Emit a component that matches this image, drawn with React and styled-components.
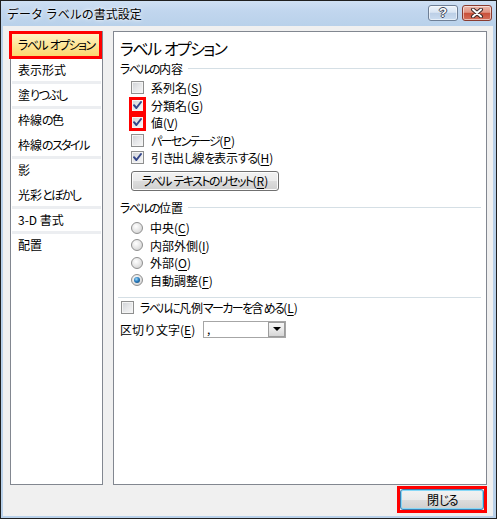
import React from 'react';
import styled, { createGlobalStyle } from 'styled-components';

const GlobalStyle = createGlobalStyle`
  html, body {
    margin: 0;
    padding: 0;
    background: #ffffff;
  }
  body {
    font-family: "Noto Sans CJK JP", "Liberation Sans", sans-serif;
    font-size: 12px;
    color: #000000;
  }
  * {
    box-sizing: border-box;
  }
`

const Window = styled.div`
  width: 497px;
  height: 519px;
  border: 1px solid #1f1f1f;
  background: #b9d1ea;
  display: flex;
  flex-direction: column;
`

const TitleBar = styled.div`
  height: 25px;
  display: flex;
  align-items: flex-start;
  padding: 0 4px 0 6px;
  background: linear-gradient(#cfe0f3 0%, #c1d6ee 40%, #b9d1ea 100%);
  .title {
    flex: 1;
    line-height: 25px;
    font-size: 12px;
    color: #000;
    text-shadow: 0 0 5px rgba(255, 255, 255, 0.95), 0 0 2px rgba(255, 255, 255, 0.9);
  }
  .buttons {
    display: flex;
    gap: 4px;
    margin-top: 4px;
  }
`

const CaptionButton = styled.div`
  width: 30px;
  height: 16px;
  border-radius: 3px;
  border: 1px solid ${p => (p.$close ? '#8a3b2f' : '#6e7f96')};
  background: ${p =>
    p.$close
      ? 'linear-gradient(#ecb8ac 0%, #e09483 45%, #c9503a 52%, #d56f5a 100%)'
      : 'linear-gradient(#eef4fb 0%, #d9e5f3 45%, #bccfe6 52%, #cadcf0 100%)'};
  box-shadow: inset 0 0 0 1px rgba(255, 255, 255, 0.55);
  display: flex;
  align-items: center;
  justify-content: center;
  font-family: "Liberation Sans", sans-serif;
  font-weight: bold;
  font-size: 13px;
  line-height: 14px;
  color: #ffffff;
  text-shadow: 1px 0 0 #3d4658, -1px 0 0 #3d4658, 0 1px 0 #3d4658, 0 -1px 0 #3d4658;
`

const Content = styled.div`
  flex: 1;
  margin: 0 3px 2px 2px;
  background: #f0f0f0;
  display: flex;
  flex-direction: column;
  padding: 5px 6px 3px 7px;
`

const Main = styled.div`
  display: flex;
  gap: 10px;
  height: 454px;
`

const CategoryList = styled.div`
  width: 93px;
  border: 1px solid #828790;
  background: #ffffff;
  padding: 2px 0 0 0;
  display: flex;
  flex-direction: column;
`

const Category = styled.div`
  height: 22px;
  line-height: 22px;
  margin: 0 3px 0 1px;
  padding-left: 6px;
  white-space: nowrap;
  ${p =>
    p.$selected &&
    `
    background: linear-gradient(#fff3c4 0%, #fde79c 45%, #fcd66e 100%);
    outline: 3px solid #ff0000;
  `}
`

const Divider = styled.div`
  height: 3px;
  margin: 0 1px;
  background: ${p => (p.$visible ? '#eceef1' : 'transparent')};
`

const OptionsPanel = styled.div`
  flex: 1;
  border: 1px solid #828790;
  background: #ffffff;
  padding: 6px 5px 0 6px;
  display: flex;
  flex-direction: column;
`

const Heading = styled.div`
  font-size: 16px;
  line-height: 20px;
  white-space: nowrap;
`

const GroupHeader = styled.div`
  display: flex;
  align-items: center;
  height: 16px;
  margin-top: ${p => p.$top}px;
  &::after {
    content: '';
    flex: 1;
    height: 1px;
    margin-left: 5px;
    background: #d5dfe5;
  }
`

const OptionList = styled.div`
  margin-top: ${p => p.$top}px;
  display: flex;
  flex-direction: column;
`

const Row = styled.label`
  display: flex;
  align-items: center;
  height: 17.5px;
  padding-left: ${p => p.$indent ?? 11}px;
  gap: ${p => p.$gap ?? 7}px;
  white-space: nowrap;
  u {
    text-underline-offset: 2px;
  }
`

const CheckBox = styled.span`
  width: 13px;
  height: 13px;
  flex: none;
  border: 1px solid #8e8f8f;
  background: linear-gradient(135deg, #cdd0d4 0%, #e6e7e9 50%, #f7f7f7 100%);
  box-shadow: inset 0 0 0 1px #f4f4f4;
  display: flex;
  align-items: center;
  justify-content: center;
  ${p => p.$marked && 'outline: 3px solid #ff0000; outline-offset: -1px;'}
`

const Radio = styled.span`
  width: 12px;
  height: 12px;
  flex: none;
  border-radius: 50%;
  border: 1px solid #8f8f8f;
  background: radial-gradient(circle at 40% 35%, #ffffff 0%, #e8e8e8 45%, #c9c9c9 100%);
  display: flex;
  align-items: center;
  justify-content: center;
  &::after {
    content: '';
    display: ${p => (p.$checked ? 'block' : 'none')};
    width: 6px;
    height: 6px;
    border-radius: 50%;
    background: radial-gradient(circle at 40% 35%, #9fdcfb 0%, #2a7dbf 45%, #0d3c68 100%);
  }
`

const PushButton = styled.button`
  width: ${p => p.$width}px;
  height: ${p => p.$height}px;
  margin: ${p => p.$margin || 0};
  border: 1px solid ${p => (p.$focused ? '#3c7fb1' : '#707070')};
  border-radius: 3px;
  background: linear-gradient(#f2f2f2 0%, #ebebeb 50%, #dddddd 50%, #cfcfcf 100%);
  box-shadow: inset 0 0 0 1px ${p => (p.$focused ? '#87d8f7' : '#fcfcfc')};
  font-family: "Noto Sans CJK JP", "Liberation Sans", sans-serif;
  font-size: 12px;
  line-height: 16px;
  color: #000;
  padding: 0;
  white-space: nowrap;
  u {
    text-underline-offset: 2px;
  }
`

const Separator = styled.div`
  height: 1px;
  margin: 8px 0 0 -2px;
  background: #d5dfe5;
`

const DelimiterRow = styled.div`
  display: flex;
  align-items: center;
  height: 18px;
  margin-top: 3.5px;
  .label {
    width: 83px;
    white-space: nowrap;
  }
  u {
    text-underline-offset: 2px;
  }
`

const ComboBox = styled.div`
  width: 83px;
  height: 17px;
  border: 1px solid #a6a6a6;
  background: #ffffff;
  display: flex;
  align-items: stretch;
  .value {
    flex: 1;
    padding-left: 3px;
    line-height: 14px;
  }
  .drop {
    width: 17px;
    border: 1px solid #9c9c9c;
    background: linear-gradient(#f6f6f6 0%, #e9e9e9 50%, #d6d6d6 100%);
    display: flex;
    align-items: center;
    justify-content: center;
  }
  .drop::after {
    content: '';
    border-left: 4px solid transparent;
    border-right: 4px solid transparent;
    border-top: 4px solid #000;
  }
`

const Footer = styled.div`
  display: flex;
  justify-content: flex-end;
  padding: 1px 0 0 0;
`

const RedMark = styled.div`
  border: 3px solid #ff0000;
  display: flex;
`

// kana in the original UI font is proportional and narrower than kanji
const Kana = styled.span`
  font-feature-settings: "palt" 1;
  letter-spacing: -1.6px;
`

const jp = text =>
  text.split(/([\u3040-\u30ff]+)/).map((part, i) =>
    i % 2 ? <Kana key={i}>{part}</Kana> : part
  )

const Check = () => (
  <svg width="11" height="11" viewBox="0 0 11 11">
    <path d="M2 5.2 L4.4 8 L9 2" fill="none" stroke="#34468a" strokeWidth="2" strokeLinecap="round" strokeLinejoin="round" />
  </svg>
)

const CloseGlyph = () => (
  <svg width="14" height="10" viewBox="0 0 14 10">
    <path d="M3 1.5 L11 8.5 M11 1.5 L3 8.5" stroke="#3d2a28" strokeWidth="4" strokeLinecap="round" />
    <path d="M3 1.5 L11 8.5 M11 1.5 L3 8.5" stroke="#ffffff" strokeWidth="2" strokeLinecap="round" />
  </svg>
)

const categories = [
  { label: 'ラベル オプション', selected: true, line: false },
  { label: '表示形式', line: true },
  { label: '塗りつぶし', line: true },
  { label: '枠線の色', line: false },
  { label: '枠線のスタイル', line: true },
  { label: '影', line: false },
  { label: '光彩とぼかし', line: true },
  { label: '3-D 書式', line: true },
  { label: '配置' },
]

const contents = [
  { label: '系列名', key: 'S', checked: false },
  { label: '分類名', key: 'G', checked: true, marked: true },
  { label: '値', key: 'V', checked: true, marked: true },
  { label: 'パーセンテージ', key: 'P', checked: false },
  { label: '引き出し線を表示する', key: 'H', checked: true },
]

const positions = [
  { label: '中央', key: 'C' },
  { label: '内部外側', key: 'I' },
  { label: '外部', key: 'O' },
  { label: '自動調整', key: 'F', checked: true },
]

const App = () => {
  return (
    <>
      <GlobalStyle />
      <Window>
        <TitleBar>
          <div className="title">データ ラベルの書式設定</div>
          <div className="buttons">
            <CaptionButton>?</CaptionButton>
            <CaptionButton $close>
              <CloseGlyph />
            </CaptionButton>
          </div>
        </TitleBar>

        <Content>
          <Main>
            <CategoryList>
              {categories.map((c, i) => (
                <React.Fragment key={c.label}>
                  <Category $selected={c.selected}>{jp(c.label)}</Category>
                  {i < categories.length - 1 && <Divider $visible={c.line} />}
                </React.Fragment>
              ))}
            </CategoryList>

            <OptionsPanel>
              <Heading>{jp('ラベル オプション')}</Heading>

              <GroupHeader $top={2}>{jp('ラベルの内容')}</GroupHeader>
              <OptionList $top={3}>
                {contents.map(o => (
                  <Row key={o.key}>
                    <CheckBox $marked={o.marked}>{o.checked && <Check />}</CheckBox>
                    <span>
                      {jp(o.label)}(<u>{o.key}</u>)
                    </span>
                  </Row>
                ))}
              </OptionList>

              <PushButton $width={148} $height={20} $margin="4px 0 0 11px">
                {jp('ラベル テキストのリセット')}(<u>R</u>)
              </PushButton>

              <GroupHeader $top={8.5}>{jp('ラベルの位置')}</GroupHeader>
              <OptionList $top={4}>
                {positions.map(o => (
                  <Row key={o.key}>
                    <Radio $checked={o.checked} />
                    <span>
                      {o.label}(<u>{o.key}</u>)
                    </span>
                  </Row>
                ))}
              </OptionList>

              <Separator />

              <OptionList $top={1}>
                <Row $indent={1} $gap={6}>
                  <CheckBox />
                  <span>
                    {jp('ラベルに凡例マーカーを含める')}(<u>L</u>)
                  </span>
                </Row>
              </OptionList>

              <DelimiterRow>
                <span className="label">
                  区切り文字(<u>E</u>)
                </span>
                <ComboBox>
                  <span className="value">,</span>
                  <span className="drop" />
                </ComboBox>
              </DelimiterRow>
            </OptionsPanel>
          </Main>

          <Footer>
            <RedMark>
              <PushButton $width={84} $height={21} $focused>
                {jp('閉じる')}
              </PushButton>
            </RedMark>
          </Footer>
        </Content>
      </Window>
    </>
  )
}

export default App;
